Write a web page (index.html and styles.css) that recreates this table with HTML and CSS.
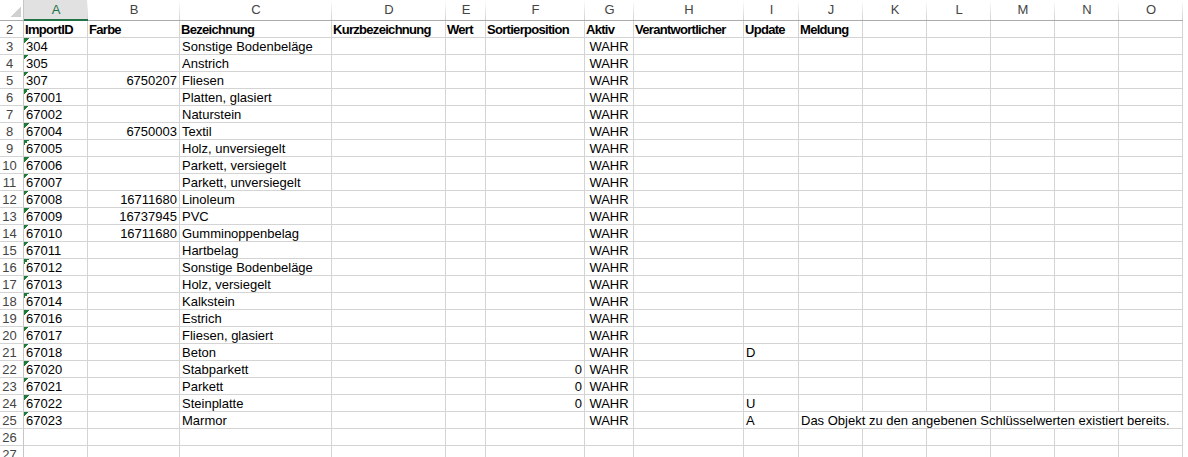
FILE: index.html
```html
<!DOCTYPE html>
<html lang="de">
<head>
<meta charset="utf-8">
<title>Tabelle</title>
<link rel="stylesheet" href="styles.css">
</head>
<body>
<div class="sheet">
  <div class="row head">
    <div class="corner"></div><div class="sel">A</div><div>B</div><div>C</div><div>D</div><div>E</div><div>F</div><div>G</div><div>H</div><div>I</div><div>J</div><div>K</div><div>L</div><div>M</div><div>N</div><div>O</div>
  </div>
  <div class="row bold">
    <div class="rh">2</div><div>ImportID</div><div>Farbe</div><div>Bezeichnung</div><div>Kurzbezeichnung</div><div>Wert</div><div>Sortierposition</div><div>Aktiv</div><div>Verantwortlicher</div><div>Update</div><div>Meldung</div><div></div><div></div><div></div><div></div><div></div>
  </div>
  <div class="row"><div class="rh">3</div><div class="t">304</div><div></div><div>Sonstige Bodenbeläge</div><div></div><div></div><div></div><div class="c">WAHR</div><div></div><div></div><div></div><div></div><div></div><div></div><div></div><div></div></div>
  <div class="row"><div class="rh">4</div><div class="t">305</div><div></div><div>Anstrich</div><div></div><div></div><div></div><div class="c">WAHR</div><div></div><div></div><div></div><div></div><div></div><div></div><div></div><div></div></div>
  <div class="row"><div class="rh">5</div><div class="t">307</div><div class="n">6750207</div><div>Fliesen</div><div></div><div></div><div></div><div class="c">WAHR</div><div></div><div></div><div></div><div></div><div></div><div></div><div></div><div></div></div>
  <div class="row"><div class="rh">6</div><div class="t">67001</div><div></div><div>Platten, glasiert</div><div></div><div></div><div></div><div class="c">WAHR</div><div></div><div></div><div></div><div></div><div></div><div></div><div></div><div></div></div>
  <div class="row"><div class="rh">7</div><div class="t">67002</div><div></div><div>Naturstein</div><div></div><div></div><div></div><div class="c">WAHR</div><div></div><div></div><div></div><div></div><div></div><div></div><div></div><div></div></div>
  <div class="row"><div class="rh">8</div><div class="t">67004</div><div class="n">6750003</div><div>Textil</div><div></div><div></div><div></div><div class="c">WAHR</div><div></div><div></div><div></div><div></div><div></div><div></div><div></div><div></div></div>
  <div class="row"><div class="rh">9</div><div class="t">67005</div><div></div><div>Holz, unversiegelt</div><div></div><div></div><div></div><div class="c">WAHR</div><div></div><div></div><div></div><div></div><div></div><div></div><div></div><div></div></div>
  <div class="row"><div class="rh">10</div><div class="t">67006</div><div></div><div>Parkett, versiegelt</div><div></div><div></div><div></div><div class="c">WAHR</div><div></div><div></div><div></div><div></div><div></div><div></div><div></div><div></div></div>
  <div class="row"><div class="rh">11</div><div class="t">67007</div><div></div><div>Parkett, unversiegelt</div><div></div><div></div><div></div><div class="c">WAHR</div><div></div><div></div><div></div><div></div><div></div><div></div><div></div><div></div></div>
  <div class="row"><div class="rh">12</div><div class="t">67008</div><div class="n">16711680</div><div>Linoleum</div><div></div><div></div><div></div><div class="c">WAHR</div><div></div><div></div><div></div><div></div><div></div><div></div><div></div><div></div></div>
  <div class="row"><div class="rh">13</div><div class="t">67009</div><div class="n">16737945</div><div>PVC</div><div></div><div></div><div></div><div class="c">WAHR</div><div></div><div></div><div></div><div></div><div></div><div></div><div></div><div></div></div>
  <div class="row"><div class="rh">14</div><div class="t">67010</div><div class="n">16711680</div><div>Gumminoppenbelag</div><div></div><div></div><div></div><div class="c">WAHR</div><div></div><div></div><div></div><div></div><div></div><div></div><div></div><div></div></div>
  <div class="row"><div class="rh">15</div><div class="t">67011</div><div></div><div>Hartbelag</div><div></div><div></div><div></div><div class="c">WAHR</div><div></div><div></div><div></div><div></div><div></div><div></div><div></div><div></div></div>
  <div class="row"><div class="rh">16</div><div class="t">67012</div><div></div><div>Sonstige Bodenbeläge</div><div></div><div></div><div></div><div class="c">WAHR</div><div></div><div></div><div></div><div></div><div></div><div></div><div></div><div></div></div>
  <div class="row"><div class="rh">17</div><div class="t">67013</div><div></div><div>Holz, versiegelt</div><div></div><div></div><div></div><div class="c">WAHR</div><div></div><div></div><div></div><div></div><div></div><div></div><div></div><div></div></div>
  <div class="row"><div class="rh">18</div><div class="t">67014</div><div></div><div>Kalkstein</div><div></div><div></div><div></div><div class="c">WAHR</div><div></div><div></div><div></div><div></div><div></div><div></div><div></div><div></div></div>
  <div class="row"><div class="rh">19</div><div class="t">67016</div><div></div><div>Estrich</div><div></div><div></div><div></div><div class="c">WAHR</div><div></div><div></div><div></div><div></div><div></div><div></div><div></div><div></div></div>
  <div class="row"><div class="rh">20</div><div class="t">67017</div><div></div><div>Fliesen, glasiert</div><div></div><div></div><div></div><div class="c">WAHR</div><div></div><div></div><div></div><div></div><div></div><div></div><div></div><div></div></div>
  <div class="row"><div class="rh">21</div><div class="t">67018</div><div></div><div>Beton</div><div></div><div></div><div></div><div class="c">WAHR</div><div></div><div>D</div><div></div><div></div><div></div><div></div><div></div><div></div></div>
  <div class="row"><div class="rh">22</div><div class="t">67020</div><div></div><div>Stabparkett</div><div></div><div></div><div class="n">0</div><div class="c">WAHR</div><div></div><div></div><div></div><div></div><div></div><div></div><div></div><div></div></div>
  <div class="row"><div class="rh">23</div><div class="t">67021</div><div></div><div>Parkett</div><div></div><div></div><div class="n">0</div><div class="c">WAHR</div><div></div><div></div><div></div><div></div><div></div><div></div><div></div><div></div></div>
  <div class="row"><div class="rh">24</div><div class="t">67022</div><div></div><div>Steinplatte</div><div></div><div></div><div class="n">0</div><div class="c">WAHR</div><div></div><div>U</div><div></div><div></div><div></div><div></div><div></div><div></div></div>
  <div class="row"><div class="rh">25</div><div class="t">67023</div><div></div><div>Marmor</div><div></div><div></div><div></div><div class="c">WAHR</div><div></div><div>A</div><div class="span6">Das Objekt zu den angebenen Schlüsselwerten existiert bereits.</div></div>
  <div class="row"><div class="rh">26</div><div></div><div></div><div></div><div></div><div></div><div></div><div></div><div></div><div></div><div></div><div></div><div></div><div></div><div></div><div></div></div>
  <div class="row"><div class="rh">27</div><div></div><div></div><div></div><div></div><div></div><div></div><div></div><div></div><div></div><div></div><div></div><div></div><div></div><div></div><div></div></div>
</div>
</body>
</html>
```

FILE: styles.css
```css
* { box-sizing: border-box; }

html, body {
  margin: 0;
  padding: 0;
  background: #ffffff;
}

body {
  font-family: "Liberation Sans", Arial, sans-serif;
  font-size: 13px;
  color: #000000;
  overflow: hidden;
}

.sheet {
  display: flex;
  flex-direction: column;
}

.row {
  display: grid;
  grid-template-columns: 24px 64px 92px 152px 114px 40px 99px 49px 110px 55px repeat(6, 64px);
  height: 17px;
}

.row > div {
  height: 17px;
  border-right: 1px solid #d4d4d4;
  border-bottom: 1px solid #d4d4d4;
  padding: 1px 2px 0 2px;
  line-height: 16px;
  white-space: nowrap;
  overflow: hidden;
}

.row > .rh {
  color: #444444;
  text-align: center;
  padding: 1px 4px 0 0;
  border-right-color: #c6c6c6;
}

.bold > div:not(.rh) {
  font-weight: bold;
  letter-spacing: -0.7px;
  padding-left: 1px;
}

.t {
  background-image: linear-gradient(to bottom right, #1f7a38 50%, transparent 50%);
  background-size: 5px 5px;
  background-position: 0 0;
  background-repeat: no-repeat;
}

.n { text-align: right; }
.c { text-align: center; }

.span6 {
  grid-column: span 6;
}

/* column header row */
.row.head {
  height: 21px;
}

.row.head > div {
  height: 21px;
  border-right: 0;
  border-bottom: 1px solid #ababab;
  color: #444444;
  text-align: center;
  line-height: 20px;
  padding: 0;
  background-image: linear-gradient(to bottom, #ffffff, #d2d2d2);
  background-size: 1px 100%;
  background-position: right top;
  background-repeat: no-repeat;
}

.row.head > .corner {
  background-image: linear-gradient(to bottom right, transparent 50%, #d0d0d0 50%), linear-gradient(#c6c6c6, #c6c6c6);
  background-size: 10px 10px, 1px 100%;
  background-position: right 3px bottom 3px, right top;
}

.row.head > .sel {
  background-color: #e1e1e1;
  color: #217346;
  border-bottom: 2px solid #217346;
  line-height: 19px;
}
```
